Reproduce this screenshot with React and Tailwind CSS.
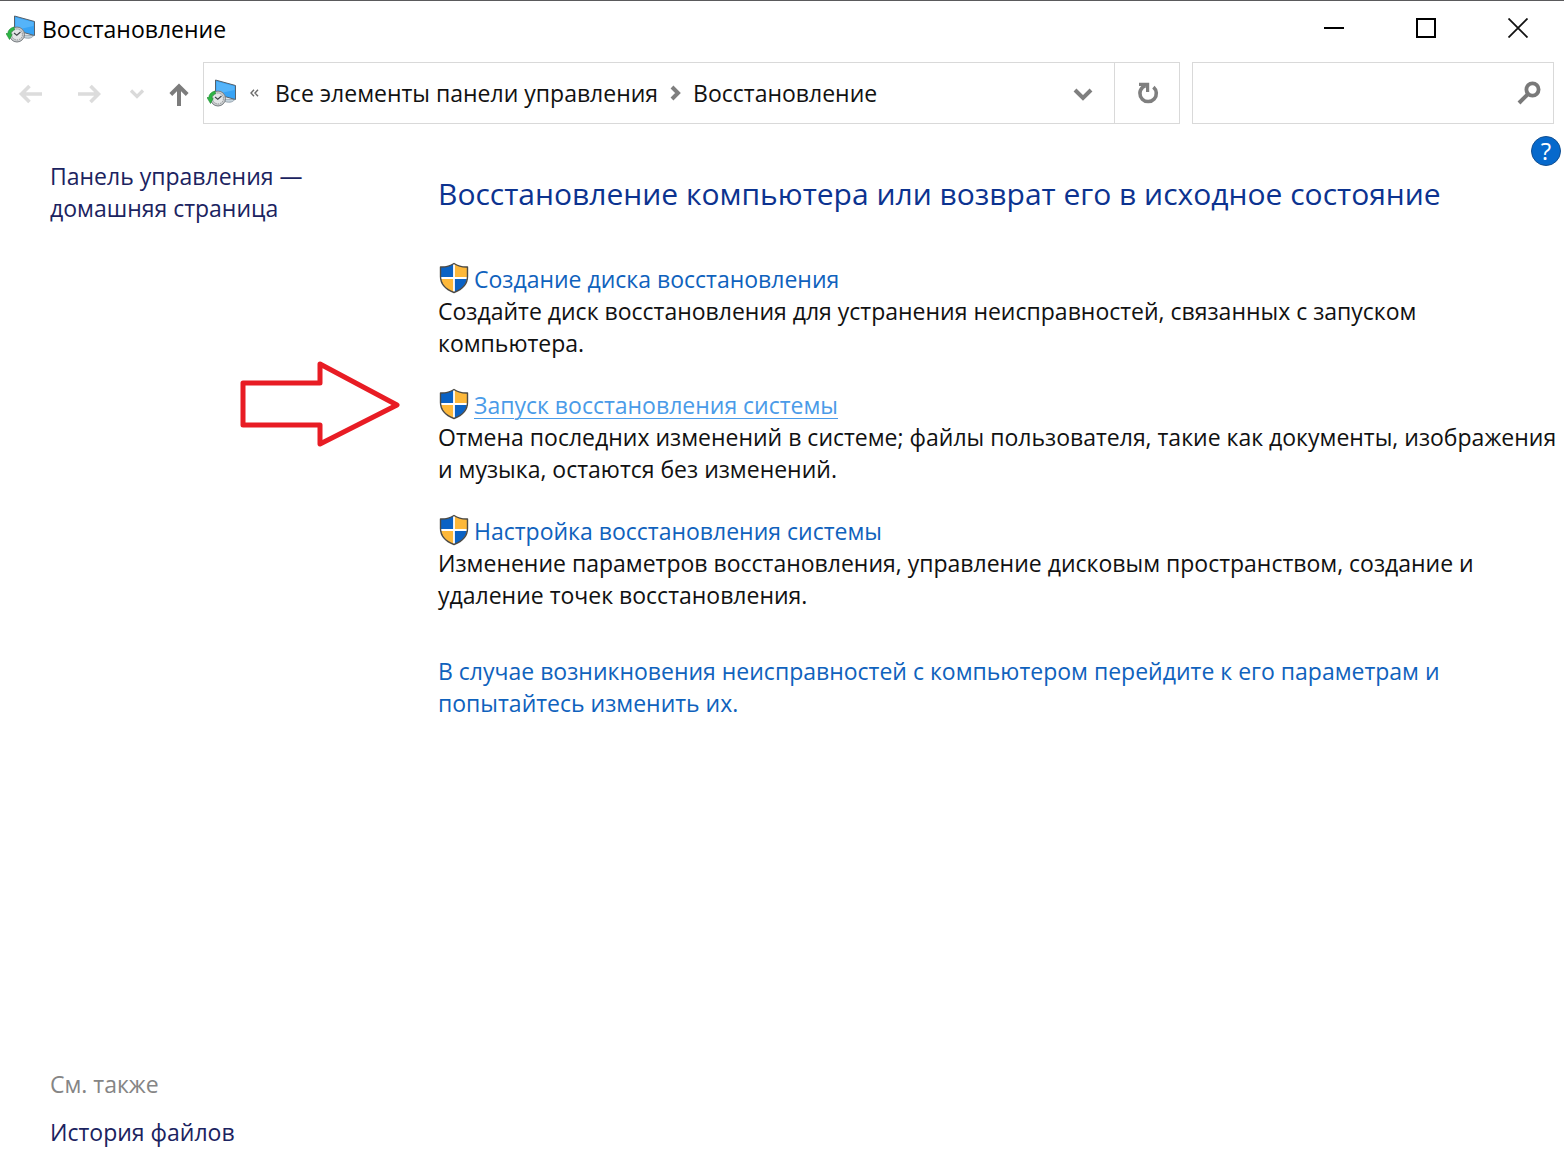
import { useState } from 'react';

const tasks = [
  {
    title: 'Создание диска восстановления',
    lines: ['Создайте диск восстановления для устранения неисправностей, связанных с запуском', 'компьютера.'],
  },
  {
    title: 'Запуск восстановления системы',
    lines: ['Отмена последних изменений в системе; файлы пользователя, такие как документы, изображения', 'и музыка, остаются без изменений.'],
    active: true,
  },
  {
    title: 'Настройка восстановления системы',
    lines: ['Изменение параметров восстановления, управление дисковым пространством, создание и', 'удаление точек восстановления.'],
  },
];

// SVGs
const RecoveryIcon = () => (
  <svg width="30" height="28" viewBox="0 0 30 28" fill="none" className="shrink-0" aria-hidden="true">
    <path d="M16 20L27 20.5C28 22 23 24.5 18 22.5Z" fill="#C5D3DC" stroke="#8A98A3" strokeWidth="0.8" />
    <path d="M8.5 1L28.5 6.5V20.5L8.5 15Z" fill="#37A3F5" stroke="#56616B" strokeWidth="1" strokeLinejoin="round" />
    <path d="M9.5 2.5L27.5 7.3V11L9.5 15Z" fill="#55B4F9" />
    <circle cx="11" cy="19.5" r="7.5" fill="#C9CCCE" stroke="#777C80" strokeWidth="1" />
    <circle cx="11" cy="19.5" r="5.4" fill="#E3E5E6" stroke="#8D9194" strokeWidth="1" strokeDasharray="1.4 1" />
    <path d="M8 18L10.8 20.2L14.5 17" stroke="#3F4448" strokeWidth="1.1" />
    <path d="M8 12C4 13 2 15.5 1.8 18.5H0L3.5 24.5L6.2 19.5H4.8C5 17 6 15.5 8.5 14.8Z" fill="#2DB544" stroke="#1C8A2F" strokeWidth="0.6" />
  </svg>
);

const ShieldIcon = () => (
  <svg width="30" height="32" viewBox="0 0 30 32" fill="none" className="shrink-0" aria-hidden="true">
    <path d="M15 1.5C11 4.2 6.5 5.2 1.8 5V14.5C1.8 22 7 27.5 15 30.5V1.5Z" fill="#0B62C4" />
    <path d="M15 1.5C19 4.2 23.5 5.2 28.2 5V14.5C28.2 22 23 27.5 15 30.5V1.5Z" fill="#FDB83A" />
    <path d="M15 16H28C27.2 23 22.4 27.7 15 30.5Z" fill="#0B62C4" />
    <path d="M15 16H2C2.8 23 7.6 27.7 15 30.5Z" fill="#FDB83A" />
    <path d="M15 2V30M2 16H28" stroke="#FFFFFF" strokeWidth="1.8" />
    <path d="M15 1.5C11 4.2 6.5 5.2 1.5 5V14.5C1.5 22 7 27.5 15 30.5C23 27.5 28.5 22 28.5 14.5V5C23.5 5.2 19 4.2 15 1.5Z" stroke="#4C4A45" strokeWidth="1.4" strokeLinejoin="round" />
  </svg>
);

const BackIcon = () => (
  <svg width="24" height="20" viewBox="0 0 24 20" fill="none" stroke="#DCDCDC" strokeWidth="3.6">
    <path d="M23 10H3M10.5 2L2.5 10L10.5 18" />
  </svg>
);

const ForwardIcon = () => (
  <svg width="24" height="20" viewBox="0 0 24 20" fill="none" stroke="#DCDCDC" strokeWidth="3.6">
    <path d="M1 10H21M13.5 2L21.5 10L13.5 18" />
  </svg>
);

const UpIcon = () => (
  <svg width="20" height="24" viewBox="0 0 20 24" fill="none" stroke="#7C7C7C" strokeWidth="4">
    <path d="M10 23V4M1.8 11.5L10 3.3L18.2 11.5" />
  </svg>
);

const RefreshIcon = () => (
  <svg width="22" height="24" viewBox="0 0 22 24" fill="none">
    <path d="M16.4 6.1A8.2 8.2 0 1 1 5.6 6.3L8.4 4.6" stroke="#7F7F7F" strokeWidth="3.6" />
    <path d="M2 3.4H10.6V11" stroke="#7F7F7F" strokeWidth="3.2" />
  </svg>
);

const SearchIcon = () => (
  <svg width="24" height="24" viewBox="0 0 24 24" fill="none" stroke="#797979">
    <circle cx="15.5" cy="8.5" r="6.1" strokeWidth="3.8" />
    <path d="M11 13L2 22" strokeWidth="4" />
  </svg>
);

const PointerArrow = () => (
  <svg width="160" height="88" viewBox="0 0 160 88" fill="none" className="absolute right-full -top-7 mr-[38px]" aria-hidden="true">
    <path d="M3 23H80V4L157 45L80 84V65H3Z" stroke="#E81C24" strokeWidth="5" strokeLinejoin="round" />
  </svg>
);

function TitleBar() {
  return (
    <header className="flex h-[61px] items-start justify-between border-t border-[#5a5a5c] pl-[6px]">
      <div className="flex h-14 items-center gap-[6px]">
        <RecoveryIcon />
        <h1 className="text-black">Восстановление</h1>
      </div>
      <div className="flex h-[54px]">
        <button type="button" aria-label="Свернуть" className="flex w-[92px] items-center justify-center">
          <svg width="20" height="20" viewBox="0 0 20 20" stroke="#000" strokeWidth="2"><path d="M0 10H20" /></svg>
        </button>
        <button type="button" aria-label="Развернуть" className="flex w-[92px] items-center justify-center">
          <svg width="20" height="20" viewBox="0 0 20 20" fill="none" stroke="#000" strokeWidth="2"><path d="M1 1H19V19H1Z" /></svg>
        </button>
        <button type="button" aria-label="Закрыть" className="flex w-[92px] items-center justify-center">
          <svg width="20" height="20" viewBox="0 0 20 20" stroke="#111" strokeWidth="1.8"><path d="M0.5 0.5L19.5 19.5M19.5 0.5L0.5 19.5" /></svg>
        </button>
      </div>
    </header>
  );
}

function NavBar() {
  const [query, setQuery] = useState('');

  return (
    <nav className="flex h-[63px] items-stretch gap-3 pt-px pr-[10px] pl-[19px]">
      <div className="flex flex-1 items-stretch">
        <div className="flex w-[184px] items-center pt-[2px]">
          <button type="button" aria-label="Назад" className="mr-[34px]"><BackIcon /></button>
          <button type="button" aria-label="Вперёд" className="mr-7"><ForwardIcon /></button>
          <button type="button" aria-label="Последние расположения" className="mr-6">
            <svg width="16" height="10" viewBox="0 0 16 10" fill="none" stroke="#DADADA" strokeWidth="3.2"><path d="M2 1.5L8 7.5L14 1.5" /></svg>
          </button>
          <button type="button" aria-label="Вверх" className="mt-[2px]"><UpIcon /></button>
        </div>
        <div className="flex flex-1 items-center border border-[#d9d9d9] pl-[3px] text-[#111]">
          <RecoveryIcon />
          <button type="button" aria-label="Показать путь" className="mr-4 ml-[13px]">
            <svg width="9" height="8" viewBox="0 0 9 8" fill="none" stroke="#6B6B6B" strokeWidth="1.4"><path d="M4 0.7L1 4L4 7.3M8 0.7L5 4L8 7.3" /></svg>
          </button>
          <a href="#all">Все элементы панели управления</a>
          <svg width="11" height="16" viewBox="0 0 11 16" fill="none" stroke="#7F7F7F" strokeWidth="4" className="mx-3"><path d="M2 2L8 8L2 14" /></svg>
          <a href="#recovery">Восстановление</a>
          <button type="button" aria-label="Предыдущие расположения" className="mr-[21px] ml-auto pt-[2px]">
            <svg width="20" height="14" viewBox="0 0 20 14" fill="none" stroke="#7F7F7F" strokeWidth="4"><path d="M2 3L10 11L18 3" /></svg>
          </button>
          <button type="button" aria-label="Обновить" className="flex w-[65px] items-center justify-center self-stretch border-l border-[#d9d9d9] pl-[2px]">
            <RefreshIcon />
          </button>
        </div>
      </div>
      <div className="flex w-[362px] items-center border border-[#d9d9d9] pr-3">
        <input
          type="search"
          aria-label="Поиск"
          value={query}
          onChange={(e) => setQuery(e.target.value)}
          className="min-w-0 flex-1 px-3 outline-none"
        />
        <button type="button" aria-label="Найти"><SearchIcon /></button>
      </div>
    </nav>
  );
}

function Task({ title, lines, active }) {
  return (
    <article className="relative">
      {active && <PointerArrow />}
      <h3 className="flex h-8 items-center gap-[5px] pl-px">
        <ShieldIcon />
        <a
          href="#task"
          className={active ? 'pt-[2px] text-[#4a9be8] underline decoration-1 underline-offset-4' : 'pt-[2px] text-[#0f62bd]'}
        >
          {title}
        </a>
      </h3>
      <p className="pt-px whitespace-nowrap text-[#111]">
        {lines[0]}
        <br />
        {lines[1]}
      </p>
    </article>
  );
}

export default function App() {
  return (
    <div className="flex min-h-screen flex-col overflow-hidden bg-white font-['Open_Sans','Noto_Sans',sans-serif] text-[23px] leading-8">
      <TitleBar />
      <NavBar />
      <div className="relative flex flex-1">
        <aside className="flex w-[438px] shrink-0 flex-col justify-between pt-9 pb-7 pl-[50px] text-[#1b2360]">
          <a href="#home">
            Панель управления —<br />
            домашняя страница
          </a>
          <div className="flex flex-col gap-4">
            <h2 className="text-[#858585]">См. также</h2>
            <a href="#history">История файлов</a>
          </div>
        </aside>
        <main className="min-w-0 flex-1 pt-[50px]">
          <h2 className="text-3xl leading-10 whitespace-nowrap text-[#0c3390]">
            Восстановление компьютера или возврат его в исходное состояние
          </h2>
          <div className="mt-12 flex flex-col gap-[29px]">
            {tasks.map((task) => (
              <Task key={task.title} {...task} />
            ))}
          </div>
          <a href="#settings" className="mt-11 block whitespace-nowrap text-[#0f62bd]">
            В случае возникновения неисправностей с компьютером перейдите к его параметрам и
            <br />
            попытайтесь изменить их.
          </a>
        </main>
        <button
          type="button"
          aria-label="Справка"
          className="absolute top-3 right-[3px] flex size-[30px] items-center justify-center rounded-full border border-[#124f91] bg-[#0669cc] text-2xl leading-none text-white"
        >
          ?
        </button>
      </div>
    </div>
  );
}
